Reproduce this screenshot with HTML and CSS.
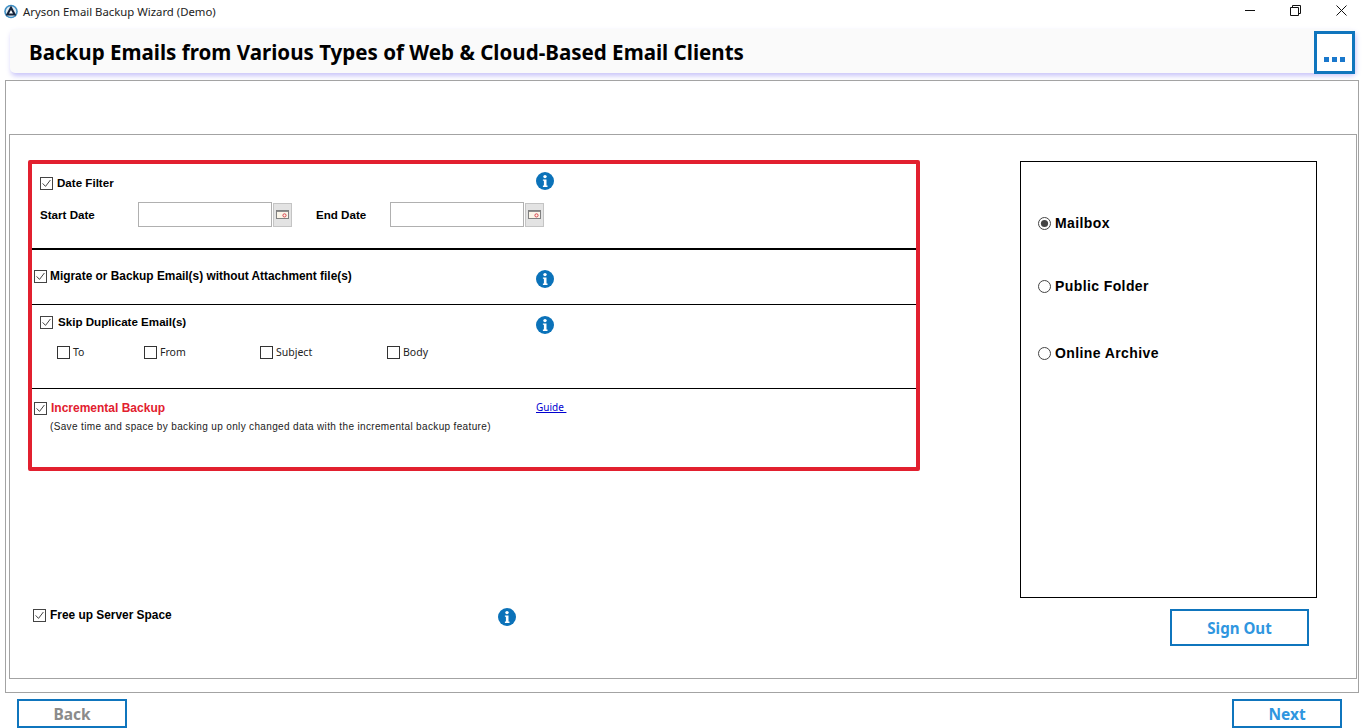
FILE: index.html
```html
<!DOCTYPE html>
<html lang="en">
<head>
<meta charset="utf-8">
<title>Aryson Email Backup Wizard (Demo)</title>
<link rel="stylesheet" href="styles.css">
</head>
<body>
<svg class="defs" width="0" height="0" aria-hidden="true">
  <symbol id="info" viewBox="0 0 18 18">
    <circle cx="9" cy="9" r="9" fill="#0b72b9"/>
    <circle cx="9" cy="4.6" r="1.7" fill="#fff"/>
    <path d="M6.9 7.4h3.6v6.2h1v1.3H6.9v-1.3h1v-4.9h-1z" fill="#fff"/>
  </symbol>
  <symbol id="cal" viewBox="0 0 13 9">
    <rect x=".5" y=".5" width="12" height="8" fill="#fbf5e8" stroke="#808080"/>
    <rect x="1" y="1" width="11" height="1" fill="#8d8d8d"/>
    <circle cx="8.5" cy="5.4" r="1.6" fill="none" stroke="#d9434e"/>
  </symbol>
  <symbol id="tick" viewBox="0 0 13 13">
    <rect x=".5" y=".5" width="12" height="12" fill="#fff" stroke="#444"/>
    <path d="M2.6 6.4l2.9 3 4.9-6.4" fill="none" stroke="#444" stroke-width="1"/>
  </symbol>
  <symbol id="box" viewBox="0 0 13 13">
    <rect x=".5" y=".5" width="12" height="12" fill="#fff" stroke="#333"/>
  </symbol>
  <symbol id="radio-on" viewBox="0 0 13 13">
    <circle cx="6.5" cy="6.5" r="6" fill="#fff" stroke="#444"/>
    <circle cx="6.5" cy="6.5" r="3.6" fill="#444"/>
  </symbol>
  <symbol id="radio-off" viewBox="0 0 13 13">
    <circle cx="6.5" cy="6.5" r="6" fill="#fff" stroke="#444"/>
  </symbol>
</svg>

<header class="titlebar">
  <svg class="logo" viewBox="0 0 14 15" aria-hidden="true">
    <circle cx="7" cy="7.5" r="6.8" fill="#3f8fc4"/>
    <circle cx="7" cy="7.5" r="5.2" fill="#dfeaf2"/>
    <path d="M7 1.6L12.4 11.6H1.6z" fill="#15233a"/>
    <path d="M7 6L9 9.6H5z" fill="#fff"/>
  </svg>
  <span class="app-name">Aryson Email Backup Wizard (Demo)</span>
  <div class="win-controls">
    <svg class="win-btn min" viewBox="0 0 11 11" aria-hidden="true"><path d="M0 5.5h10" stroke="#111" fill="none"/></svg>
    <svg class="win-btn restore" viewBox="0 0 11 11" aria-hidden="true"><path d="M2.5 2.5V.5h8v8h-2M.5 2.5h8v8h-8z" stroke="#111" fill="none"/></svg>
    <svg class="win-btn close" viewBox="0 0 11 11" aria-hidden="true"><path d="M.5.5l10 10M10.5.5l-10 10" stroke="#111" fill="none"/></svg>
  </div>
</header>

<div class="banner">
  <h1 class="banner-title">Backup Emails from Various Types of Web &amp; Cloud-Based Email Clients</h1>
  <button class="more-btn" type="button"><span class="dot"></span><span class="dot"></span><span class="dot"></span></button>
</div>

<main class="outer-frame">
  <div class="inner-frame">
    <div class="left-col">
      <section class="red-box">
        <div class="sec sec-date">
          <div class="row row-date-head">
            <label class="check-label w-496"><svg class="cb"><use href="#tick"/></svg><span class="strong-sm tight">Date Filter</span></label>
            <svg class="info"><use href="#info"/></svg>
          </div>
          <div class="row row-dates">
            <span class="date-label w-98 strong-sm tight">Start Date</span>
            <span class="date-input"></span>
            <span class="cal-btn"><svg class="cal"><use href="#cal"/></svg></span>
            <span class="date-label w-74 strong-sm tight end-label">End Date</span>
            <span class="date-input"></span>
            <span class="cal-btn"><svg class="cal"><use href="#cal"/></svg></span>
          </div>
        </div>
        <div class="sec sec-attach">
          <label class="check-label w-502"><svg class="cb"><use href="#tick"/></svg><span class="strong-sm attach-text">Migrate or Backup Email(s) without Attachment file(s)</span></label>
          <svg class="info info-attach"><use href="#info"/></svg>
        </div>
        <div class="sec sec-dup">
          <div class="row row-dup-head">
            <label class="check-label w-496"><svg class="cb"><use href="#tick"/></svg><span class="strong-sm tight dup-text">Skip Duplicate Email(s)</span></label>
            <svg class="info info-dup"><use href="#info"/></svg>
          </div>
          <div class="dup-options">
            <label class="check-label opt"><svg class="cb"><use href="#box"/></svg><span class="plain-sm">To</span></label>
            <label class="check-label opt opt-from"><svg class="cb"><use href="#box"/></svg><span class="plain-sm">From</span></label>
            <label class="check-label opt"><svg class="cb"><use href="#box"/></svg><span class="plain-sm">Subject</span></label>
            <label class="check-label opt"><svg class="cb"><use href="#box"/></svg><span class="plain-sm">Body</span></label>
          </div>
        </div>
        <div class="sec sec-inc">
          <div class="row">
            <label class="check-label w-502"><svg class="cb"><use href="#tick"/></svg><span class="strong-sm red-text">Incremental Backup</span></label>
            <a class="guide" href="#">Guide </a>
          </div>
          <p class="note">(Save time and space by backing up only changed data with the incremental backup feature)</p>
        </div>
      </section>
      <div class="free-row">
        <label class="check-label w-465"><svg class="cb"><use href="#tick"/></svg><span class="strong-sm free-text">Free up Server Space</span></label>
        <svg class="info"><use href="#info"/></svg>
      </div>
    </div>
    <div class="right-col">
      <div class="radio-panel">
        <label class="radio-label r1"><svg class="cb"><use href="#radio-on"/></svg><span>Mailbox</span></label>
        <label class="radio-label r2"><svg class="cb"><use href="#radio-off"/></svg><span>Public Folder</span></label>
        <label class="radio-label r3"><svg class="cb"><use href="#radio-off"/></svg><span>Online Archive</span></label>
      </div>
      <button class="btn btn-signout" type="button">Sign Out</button>
    </div>
  </div>
</main>

<footer class="nav">
  <button class="btn btn-nav btn-back" type="button">Back</button>
  <button class="btn btn-nav" type="button">Next</button>
</footer>
</body>
</html>
```
FILE: styles.css
```css
* { box-sizing: border-box; }
html, body { margin: 0; padding: 0; }
body {
  width: 1366px;
  height: 728px;
  overflow: hidden;
  background: #fff;
  color: #000;
  font-family: "Liberation Sans", Arial, sans-serif;
}
.defs { display: block; height: 0; }

.titlebar { display: flex; align-items: center; height: 26px; padding: 0 0 6px 4px; }
.logo { width: 14px; height: 15px; flex: none; margin-top: 2px; }
.app-name { margin: 4px 0 0 5px; font: 11.35px/16px "Noto Sans", sans-serif; color: #222; }
.win-controls { margin-left: auto; display: flex; align-items: center; }
.win-btn { width: 11px; height: 11px; display: block; }
.min { margin-right: 34px; }
.restore { margin-right: 35px; }
.close { margin-right: 19px; }

.banner {
  display: flex;
  align-items: stretch;
  justify-content: space-between;
  height: 44px;
  margin: 3px 11px 7px 10px;
  padding-top: 2px;
  background: #fafafa;
  border-radius: 5px;
  box-shadow: 1px 3px 5px rgba(120, 110, 240, .4);
}
.banner-title {
  margin: 0;
  padding-left: 19px;
  align-self: center;
  font: bold 20.55px/26px "Noto Sans", sans-serif;
  color: #000;
}
.more-btn {
  width: 41px;
  margin-bottom: -1px;
  padding: 13px 0 0;
  display: flex;
  align-items: center;
  justify-content: center;
  gap: 3px;
  background: #fff;
  border: 3px solid #0f75bd;
}
.dot { width: 5px; height: 5px; background: #1a78cc; }

.outer-frame {
  width: 1354px;
  height: 613px;
  margin: 0 0 0 5px;
  padding: 53px 1px 13px 3px;
  border: 1px solid #a3a3a3;
}
.inner-frame {
  display: flex;
  height: 100%;
  border: 1px solid #a3a3a3;
}

.left-col { width: 1010px; padding: 25px 0 0 18px; flex: none; }
.red-box {
  width: 892px;
  height: 311px;
  border: 4px solid #e2202f;
  border-radius: 2px;
}
.sec { border-bottom: 1px solid #000; }
.row { display: flex; align-items: flex-start; }

.check-label { display: flex; align-items: center; flex: none; }
.cb { width: 13px; height: 13px; flex: none; display: block; }
.strong-sm { font-size: 12px; line-height: 14px; font-weight: bold; margin-left: 4px; white-space: nowrap; }
.tight { font-size: 11.6px; }
.attach-text { font-size: 11.88px; }
.plain-sm { font: 10.5px/13px "Noto Sans", sans-serif; margin-left: 3px; color: #222; }
.w-496 { width: 496px; }
.w-502 { width: 502px; }
.w-465 { width: 465px; }
.w-98 { width: 98px; }
.w-74 { width: 74px; }

.info { width: 18px; height: 18px; display: block; flex: none; }

.sec-date { height: 86px; padding: 8px 0 0 8px; border-bottom-width: 2px; }
.row-date-head .check-label { margin-top: 4px; }
.row-dates { margin-top: 12px; align-items: center; }
.date-label { margin-left: 0; }
.end-label { margin-left: 24px; }
.date-input { width: 134px; height: 25px; border: 1px solid #b0b0b0; background: #fff; flex: none; }
.cal-btn {
  width: 19px;
  height: 24px;
  margin-left: 1px;
  display: flex;
  align-items: center;
  justify-content: center;
  background: #e3e3e3;
  border: 1px solid #c4c4c4;
  flex: none;
}
.cal { width: 13px; height: 9px; display: block; }

.sec-attach { height: 55px; padding: 19px 0 0 2px; display: flex; align-items: flex-start; }
.sec-attach .strong-sm { margin-left: 3px; }
.info-attach { margin-top: 1px; }

.sec-dup { height: 84px; padding: 9px 0 0 8px; }
.sec-dup .check-label { margin-top: 1px; }
.info-dup { margin-top: 2px; }
.dup-text { margin-left: 5px; }
.dup-options {
  display: grid;
  grid-template-columns: 87px 116px 127px 80px;
  margin: 11px 0 0 17px;
}
.sec-dup .opt { margin: 0; }
.sec-dup .opt-from { margin-top: 1px; }

.sec-inc { height: 77px; padding: 12px 0 0 2px; border-bottom: 0; }
.red-text { color: #e2202f; margin-left: 4px; }
.guide { font: 10px/13px "Noto Sans", sans-serif; color: #0000d0; text-decoration: underline; white-space: pre; }
.note { margin: 6px 0 0 16px; font-size: 10px; line-height: 12px; letter-spacing: .35px; color: #222; white-space: nowrap; }

.free-row { display: flex; align-items: flex-start; margin: 137px 0 0 5px; }
.free-text { margin-left: 4px; font-size: 11.9px; }

.right-col { width: 297px; padding-top: 26px; flex: none; }
.radio-panel {
  width: 297px;
  height: 437px;
  padding: 53px 0 0 17px;
  border: 1px solid #000;
}
.radio-label { display: flex; align-items: center; font-size: 14px; line-height: 16px; font-weight: bold; letter-spacing: .4px; }
.radio-label span { margin-left: 4px; }
.r2 { margin-top: 47px; }
.r3 { margin-top: 51px; }

.btn {
  display: block;
  padding: 0;
  background: #fff;
  border: 2px solid #0f75bd;
  color: #2f96df;
  font: bold 15.5px/18px "Noto Sans", sans-serif;
}
.btn-signout { width: 139px; height: 37px; margin: 11px 0 0 150px; font-size: 15.1px; }

.nav { display: flex; justify-content: space-between; margin: 6px 24px 0 17px; }
.btn-nav { width: 110px; height: 29px; }
.btn-back { color: #8b8b8b; }
```
